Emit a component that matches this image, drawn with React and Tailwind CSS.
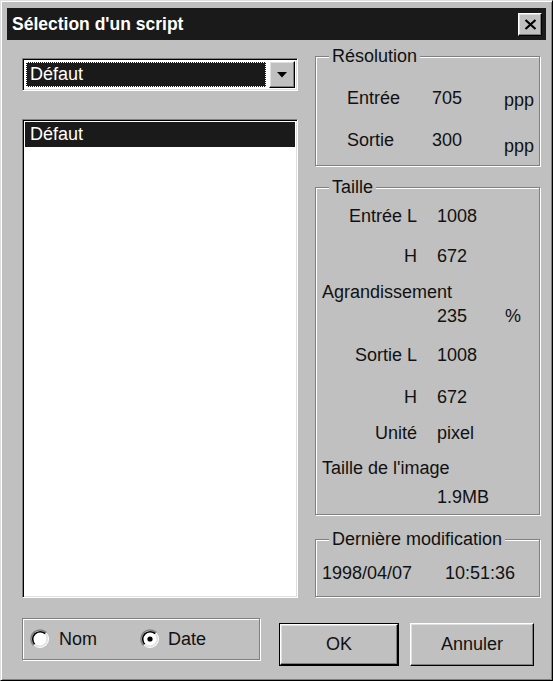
import React from "react";

const raised =
  "border border-t-white border-l-white border-r-black border-b-black shadow-[inset_-1px_-1px_0_#808080,inset_1px_1px_0_#dfdfdf]";
const sunken =
  "border border-t-[#808080] border-l-[#808080] border-r-white border-b-white shadow-[inset_1px_1px_0_#000,inset_-1px_-1px_0_#dfdfdf]";
const etched = "border border-[#808080] shadow-[inset_1px_1px_0_#fff,1px_1px_0_#fff]";

function GroupBox({ title, className = "", children }) {
  return (
    <div className={`relative ${etched} ${className}`}>
      {title && (
        <span className="absolute -top-[11px] left-[13px] bg-[#c0c0c0] px-[3px] leading-[20px]">
          {title}
        </span>
      )}
      {children}
    </div>
  );
}

function Radio({ checked }) {
  return (
    <svg width="20" height="20" viewBox="0 0 20 20">
      <circle cx="10" cy="10" r="9" fill="#fff" />
      <path d="M16.4 3.6 A9 9 0 0 0 3.6 16.4" stroke="#808080" strokeWidth="1.6" fill="none" />
      <path d="M15.3 4.7 A7.5 7.5 0 0 0 4.7 15.3" stroke="#000" strokeWidth="1.6" fill="none" />
      <path d="M4.7 15.3 A7.5 7.5 0 0 0 15.3 4.7" stroke="#dfdfdf" strokeWidth="1.6" fill="none" />
      {checked && <circle cx="10" cy="10" r="2.6" fill="#000" />}
    </svg>
  );
}

// Taille rows: label (right aligned), value, unit
function Row({ label, value, unit, className = "" }) {
  return (
    <div className={`flex h-[20px] leading-[20px] ${className}`}>
      <span className="w-[101px] text-right">{label}</span>
      <span className="ml-[20px] w-[68px]">{value}</span>
      {unit && <span>{unit}</span>}
    </div>
  );
}

export default function App() {
  return (
    <div className="w-[553px] h-[681px] bg-[#c0c0c0] border border-t-[#dfdfdf] border-l-[#dfdfdf] border-r-black border-b-black shadow-[inset_1px_1px_0_#fff,inset_-1px_-1px_0_#808080] px-[6px] pt-[7px] flex flex-col text-[18px] text-[#111] font-['Liberation_Sans',Arial,sans-serif]">
      {/* title bar */}
      <div className="h-[32px] shrink-0 bg-[#1a1a1a] flex items-center justify-between pl-[5px] pr-[4px]">
        <span className="text-white font-bold text-[17.5px]">Sélection d'un script</span>
        <button className={`w-[24px] h-[23px] bg-[#c0c0c0] flex items-center justify-center ${raised}`}>
          <svg width="13" height="11" viewBox="0 0 13 11">
            <path d="M1.5 1 L11.5 10 M11.5 1 L1.5 10" stroke="#000" strokeWidth="2.2" />
          </svg>
        </button>
      </div>

      <div className="flex flex-col pl-[15px] pr-[6px] pt-[16px]">
        <div className="flex h-[542px] gap-[17px]">
          {/* left column */}
          <div className="w-[276px] flex flex-col">
            <div className={`mt-[2px] h-[33px] bg-white flex p-[2px] ${sunken}`}>
              <div className="flex-1 m-[1px] bg-[#1a1a1a] outline-1 outline-dotted outline-white -outline-offset-1 text-white leading-[25px] pl-[4px]">
                Défaut
              </div>
              <div className={`w-[26px] ml-[2px] bg-[#c0c0c0] flex items-center justify-center ${raised}`}>
                <svg width="10" height="6" viewBox="0 0 10 6">
                  <polygon points="0,0 10,0 5,5.5" fill="#000" />
                </svg>
              </div>
            </div>
            <div className={`mt-[28px] flex-1 bg-white p-[2px] ${sunken}`}>
              <div className="h-[25px] bg-[#1a1a1a] text-white leading-[25px] pl-[5px]">Défaut</div>
            </div>
          </div>

          {/* right column */}
          <div className="w-[225px] flex flex-col">
            <GroupBox title="Résolution" className="h-[110px] shrink-0">
              <div className="pl-[31px] pt-[31px]">
                <div className="flex h-[20px] leading-[20px]">
                  <span className="w-[85px]">Entrée</span>
                  <span className="w-[72px]">705</span>
                  <span className="mt-[2px]">ppp</span>
                </div>
                <div className="flex h-[20px] leading-[20px] mt-[22px]">
                  <span className="w-[85px]">Sortie</span>
                  <span className="w-[72px]">300</span>
                  <span className="mt-[6px]">ppp</span>
                </div>
              </div>
            </GroupBox>

            <GroupBox title="Taille" className="mt-[21px] h-[328px] shrink-0">
              <div className="flex flex-col">
                <Row label="Entrée L" value="1008" className="mt-[18px]" />
                <Row label="H" value="672" className="mt-[20px]" />
                <div className="mt-[16px] h-[20px] leading-[20px] pl-[6px]">Agrandissement</div>
                <Row label="" value="235" unit="%" className="mt-[4px]" />
                <Row label="Sortie L" value="1008" className="mt-[19px]" />
                <Row label="H" value="672" className="mt-[22px]" />
                <Row label="Unité" value="pixel" className="mt-[16px]" />
                <div className="mt-[15px] h-[20px] leading-[20px] pl-[6px]">Taille de l'image</div>
                <Row label="" value="1.9MB" className="mt-[9px]" />
              </div>
            </GroupBox>

            <GroupBox title="Dernière modification" className="mt-[24px] h-[58px] shrink-0">
              <div className="flex pl-[6px] pt-[23px] h-[20px] leading-[20px] box-content">
                <span className="w-[123px]">1998/04/07</span>
                <span>10:51:36</span>
              </div>
            </GroupBox>
          </div>
        </div>

        {/* bottom row */}
        <div className="flex items-start mt-[20px] pr-[6px]">
          <GroupBox className="w-[238px] h-[42px] flex items-center pl-[7px]">
            <Radio />
            <span className="ml-[9px] w-[81px]">Nom</span>
            <Radio checked />
            <span className="ml-[8px]">Date</span>
          </GroupBox>
          <div className="ml-auto mt-[5px] flex gap-[11px]">
            <div className="border border-black">
              <button className={`w-[118px] h-[41px] bg-[#c0c0c0] ${raised}`}>OK</button>
            </div>
            <button className={`w-[124px] h-[43px] bg-[#c0c0c0] ${raised}`}>Annuler</button>
          </div>
        </div>
      </div>
    </div>
  );
}
